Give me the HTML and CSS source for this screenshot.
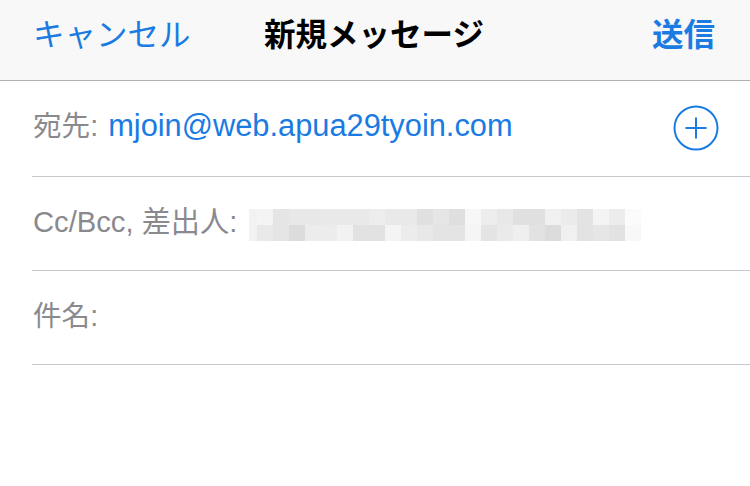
FILE: index.html
```html
<!DOCTYPE html>
<html lang="ja">
<head>
<meta charset="utf-8">
<title>新規メッセージ</title>
<link rel="stylesheet" href="styles.css">
</head>
<body>
<div class="screen">
  <header class="nav">
    <span class="nav-btn cancel">キャンセル</span>
    <span class="nav-title">新規メッセージ</span>
    <span class="nav-btn send">送信</span>
  </header>
  <main class="fields">
    <div class="row first">
      <span class="label">宛先:</span>
      <span class="value email">mjoin@web.apua29tyoin.com</span>
      <svg class="add" width="46" height="46" viewBox="0 0 46 46" aria-hidden="true">
        <circle cx="23" cy="23" r="21.5" fill="none" stroke="#1a7be2" stroke-width="2"/>
        <path d="M23 12.5v21M12.5 23h21" stroke="#1a7be2" stroke-width="2" fill="none"/>
      </svg>
    </div>
    <div class="row">
      <span class="label cc">Cc/Bcc, 差出人:</span>
      <div class="mosaic">
        <i class="f2"></i><i class="f4"></i><i class="e5"></i><i class="e8"></i><i class="e8"></i><i class="e9"></i><i class="e9"></i><i class="e9"></i><i class="ed"></i><i class="e9"></i><i class="e9"></i><i class="e0"></i><i class="e6"></i><i class="df"></i><i class="f7"></i><i class="ed"></i><i class="e8"></i><i class="e0"></i><i class="e0"></i><i class="f0"></i><i class="eb"></i><i class="e3"></i><i class="f4"></i><i class="ec"></i><i class="fb"></i>
        <i class="f2"></i><i class="e9"></i><i class="e5"></i><i class="dc"></i><i class="ec"></i><i class="ec"></i><i class="f2"></i><i class="e2"></i><i class="e2"></i><i class="f4"></i><i class="ec"></i><i class="e8"></i><i class="e4"></i><i class="e4"></i><i class="f5"></i><i class="e4"></i><i class="ea"></i><i class="ef"></i><i class="e2"></i><i class="dc"></i><i class="f0"></i><i class="e3"></i><i class="e6"></i><i class="e2"></i><i class="f8"></i>
      </div>
    </div>
    <div class="row">
      <span class="label">件名:</span>
    </div>
  </main>
</div>
</body>
</html>
```

FILE: styles.css
```css
* { box-sizing: border-box; }
html, body { margin: 0; padding: 0; background: #fff; }
body {
  font-family: "Liberation Sans", "Noto Sans CJK JP", sans-serif;
  width: 750px;
  height: 486px;
  overflow: hidden;
}
.screen { width: 750px; }

.nav {
  height: 81px;
  background: #f8f8f8;
  border-bottom: 1px solid #b1b1b1;
  display: grid;
  grid-template-columns: 1fr auto 1fr;
  align-items: center;
  padding: 0 35px 9px 33px;
}
.nav-btn {
  font-size: 31.5px;
  color: #1a7be2;
  line-height: 1;
}
.cancel { justify-self: start; }
.send { justify-self: end; font-weight: bold; }
.nav-title {
  font-size: 31.5px;
  font-weight: bold;
  color: #000;
  line-height: 1;
}

.fields { padding-left: 32px; }
.row {
  height: 94px;
  border-bottom: 1px solid #c8c8cc;
  display: flex;
  align-items: center;
  padding-bottom: 2px;
}
.row.first {
  height: 96px;
  padding-bottom: 4px;
}
.label {
  font-size: 28.6px;
  color: #8a8a8e;
  line-height: 1;
  margin-left: 1px;
}
.label.cc { font-size: 29.2px; }
.value { margin-left: 10px; }
.email {
  font-size: 30.8px;
  color: #1a7be2;
  line-height: 1;
}
.add {
  margin-left: auto;
  margin-right: 31px;
  margin-top: 2px;
  display: block;
}

.mosaic {
  margin-left: 12px;
  display: grid;
  grid-template-columns: 8px repeat(24, 16px);
  grid-template-rows: 16px 16px;
  margin-top: 4px;
}
.mosaic i { display: block; }
.dc { background: #dcdcdc; }
.df { background: #dfdfdf; }
.e0 { background: #e0e0e0; }
.e2 { background: #e2e2e2; }
.e3 { background: #e3e3e3; }
.e4 { background: #e4e4e4; }
.e5 { background: #e5e5e5; }
.e6 { background: #e6e6e6; }
.e8 { background: #e8e8e8; }
.e9 { background: #e9e9e9; }
.ea { background: #eaeaea; }
.eb { background: #ebebeb; }
.ec { background: #ececec; }
.ed { background: #ededed; }
.ef { background: #efefef; }
.f0 { background: #f0f0f0; }
.f2 { background: #f2f2f2; }
.f4 { background: #f4f4f4; }
.f5 { background: #f5f5f5; }
.f7 { background: #f7f7f7; }
.f8 { background: #f8f8f8; }
.fb { background: #fbfbfb; }
```
